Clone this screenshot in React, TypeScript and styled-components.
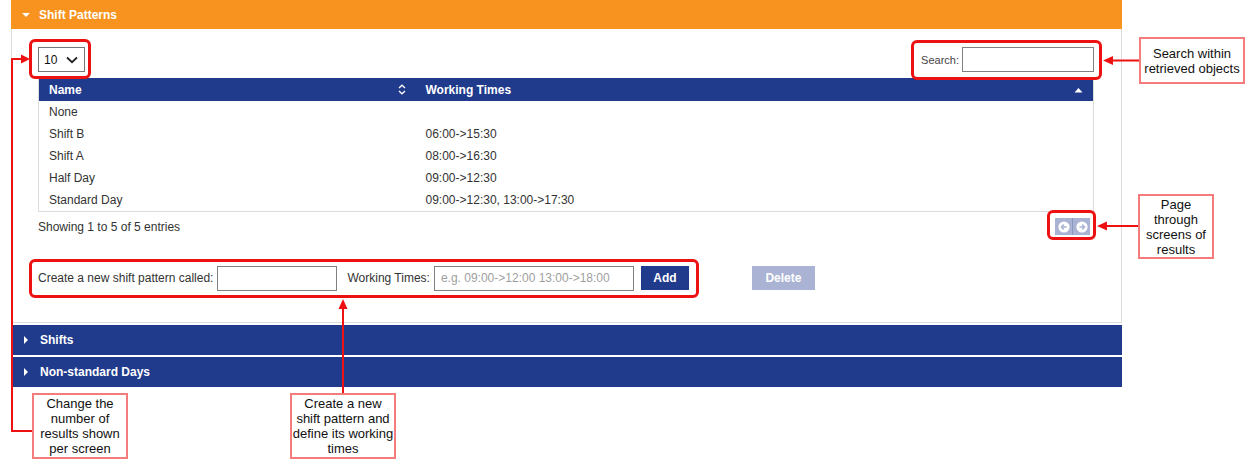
import styled, { createGlobalStyle } from "styled-components";

const GlobalStyle = createGlobalStyle`
  html, body {
    margin: 0;
    padding: 0;
    background: #fff;
    font-family: "Liberation Sans", Arial, sans-serif;
  }
`;

type Row = { name: string; times: string };

const rows: Row[] = [
  { name: "None", times: "" },
  { name: "Shift B", times: "06:00->15:30" },
  { name: "Shift A", times: "08:00->16:30" },
  { name: "Half Day", times: "09:00->12:30" },
  { name: "Standard Day", times: "09:00->12:30, 13:00->17:30" },
];

const BLUE = "#203a8c";

const App = () => {
  return (
    <Canvas>
      <GlobalStyle />
      <Page>
        <SectionBar $color="#f7931e">
          <Caret $open />
          Shift Patterns
        </SectionBar>
        <PanelBody>
          <TopRow>
            <FakeSelect>
              <span>10</span>
              <svg width="12" height="8" viewBox="0 0 12 8">
                <path d="M1 1.5 L6 6.2 L11 1.5" fill="none" stroke="#222" strokeWidth="1.8" />
              </svg>
            </FakeSelect>
            <SearchLabel>
              Search:
              <SearchInput type="text" />
            </SearchLabel>
          </TopRow>

          <Table>
            <thead>
              <tr>
                <HeadCell $width={377}>
                  <HeadInner>
                    Name
                    <svg width="8" height="11" viewBox="0 0 8 11">
                      <path d="M1 4 L4 1.2 L7 4 M1 7 L4 9.8 L7 7" fill="none" stroke="#fff" strokeWidth="1.3" />
                    </svg>
                  </HeadInner>
                </HeadCell>
                <HeadCell>
                  <HeadInner>
                    Working Times
                    <svg width="9" height="6" viewBox="0 0 9 6">
                      <path d="M0.5 5.5 L4.5 1 L8.5 5.5 Z" fill="#fff" />
                    </svg>
                  </HeadInner>
                </HeadCell>
              </tr>
            </thead>
            <tbody>
              {rows.map((r) => (
                <tr key={r.name}>
                  <Cell>{r.name}</Cell>
                  <Cell>{r.times}</Cell>
                </tr>
              ))}
            </tbody>
          </Table>

          <InfoRow>
            <span>Showing 1 to 5 of 5 entries</span>
            <Pager>
              <PageBtn>
                <ArrowCircle dir="left" />
              </PageBtn>
              <PageBtn>
                <ArrowCircle dir="right" />
              </PageBtn>
            </Pager>
          </InfoRow>

          <FormRow>
            <FormLabel>Create a new shift pattern called:</FormLabel>
            <TextInput type="text" $width={120} />
            <FormLabel style={{ marginLeft: 10 }}>Working Times:</FormLabel>
            <TextInput type="text" $width={200} placeholder="e.g. 09:00->12:00 13:00->18:00" />
            <ActionButton $color={BLUE} $width={48} style={{ marginLeft: 7 }}>
              Add
            </ActionButton>
            <ActionButton $color="#aab3d4" $width={63} style={{ marginLeft: 63 }}>
              Delete
            </ActionButton>
          </FormRow>
        </PanelBody>

        <SectionBar $color={BLUE} $gap>
          <Caret />
          Shifts
        </SectionBar>
        <SectionBar $color={BLUE} $gap>
          <Caret />
          Non-standard Days
        </SectionBar>
      </Page>

      {/* callout highlights */}
      <Highlight style={{ left: 29, top: 39, width: 62, height: 40 }} />
      <Highlight style={{ left: 911, top: 40, width: 191, height: 40 }} />
      <Highlight style={{ left: 1047, top: 210, width: 49, height: 30 }} />
      <Highlight style={{ left: 29, top: 259, width: 670, height: 39 }} />

      <Leaders width="1256" height="471" viewBox="0 0 1256 471">
        <g stroke="#ee1111" strokeWidth="2" fill="none">
          <path d="M12 59 L22 59 M12 58 L12 431 L33 431" />
          <path d="M1139 60.5 L1112 60.5" />
          <path d="M1139 226 L1106 226" />
          <path d="M343 394 L343 308" />
        </g>
        <g fill="#ee1111">
          <path d="M30 59 L21 54.5 L21 63.5 Z" />
          <path d="M1103 60.5 L1113 56 L1113 65 Z" />
          <path d="M1097 226 L1107 221.5 L1107 230.5 Z" />
          <path d="M343 299 L338.5 309 L347.5 309 Z" />
        </g>
      </Leaders>

      <Note style={{ left: 1139, top: 37, width: 102, height: 43 }}>
        Search within
        <br />
        retrieved objects
      </Note>
      <Note style={{ left: 1138, top: 194, width: 72, height: 61 }}>
        Page
        <br />
        through
        <br />
        screens of
        <br />
        results
      </Note>
      <Note style={{ left: 32, top: 393, width: 92, height: 62 }}>
        Change the
        <br />
        number of
        <br />
        results shown
        <br />
        per screen
      </Note>
      <Note style={{ left: 290, top: 393, width: 102, height: 62 }}>
        Create a new
        <br />
        shift pattern and
        <br />
        define its working
        <br />
        times
      </Note>
    </Canvas>
  );
};

const ArrowCircle = ({ dir }: { dir: "left" | "right" }) => (
  <svg width="12" height="12" viewBox="0 0 12 12">
    <circle cx="6" cy="6" r="5.6" fill="#fff" />
    {dir === "left" ? (
      <path d="M8.6 6 H3.6 M5.8 3.6 L3.4 6 L5.8 8.4" fill="none" stroke="#aab3d4" strokeWidth="1.4" />
    ) : (
      <path d="M3.4 6 H8.4 M6.2 3.6 L8.6 6 L6.2 8.4" fill="none" stroke="#aab3d4" strokeWidth="1.4" />
    )}
  </svg>
);

const Canvas = styled.div`
  position: relative;
  width: 1256px;
  height: 471px;
  overflow: hidden;
`;

const Page = styled.div`
  margin-left: 11px;
  width: 1111px;
`;

const SectionBar = styled.div<{ $color: string; $gap?: boolean }>`
  display: flex;
  align-items: center;
  gap: 9px;
  height: ${(p) => (p.$gap ? "30px" : "29px")};
  margin-top: ${(p) => (p.$gap ? "2px" : "0")};
  padding-left: 11px;
  background: ${(p) => p.$color};
  color: #fff;
  font-size: 12px;
  font-weight: bold;
`;

const Caret = styled.span<{ $open?: boolean }>`
  display: inline-block;
  width: 0;
  height: 0;
  margin-left: ${(p) => (p.$open ? "0" : "2px")};
  margin-right: ${(p) => (p.$open ? "0" : "3px")};
  ${(p) =>
    p.$open
      ? `border-left: 4px solid transparent;
         border-right: 4px solid transparent;
         border-top: 4px solid #fff;`
      : `border-top: 4px solid transparent;
         border-bottom: 4px solid transparent;
         border-left: 4px solid #fff;`}
`;

const PanelBody = styled.div`
  border: 1px solid #dcdcdc;
  border-top: none;
  padding: 18px 27px 31px 26px;
`;

const TopRow = styled.div`
  display: flex;
  justify-content: space-between;
  align-items: center;
  height: 25px;
  margin-bottom: 6px;
`;

const FakeSelect = styled.div`
  box-sizing: border-box;
  width: 47px;
  height: 25px;
  border: 1px solid #767676;
  display: flex;
  align-items: center;
  justify-content: space-between;
  padding: 0 6px 0 5px;
  font-size: 12px;
  color: #111;
`;

const SearchLabel = styled.label`
  display: flex;
  align-items: center;
  gap: 3px;
  font-size: 11px;
  color: #444;
`;

const SearchInput = styled.input`
  box-sizing: border-box;
  width: 132px;
  height: 25px;
  border: 1px solid #808080;
  margin: 0;
  outline: none;
`;

const Table = styled.table`
  width: 100%;
  border-collapse: collapse;
  font-size: 12px;
  color: #333;
  border-left: 1px solid #dcdcdc;
  border-right: 1px solid #dcdcdc;
  border-bottom: 1px solid #dcdcdc;
`;

const HeadCell = styled.th<{ $width?: number }>`
  background: ${BLUE};
  color: #fff;
  height: 23px;
  padding: 0 10px;
  text-align: left;
  font-weight: bold;
  width: ${(p) => (p.$width ? `${p.$width}px` : "auto")};
  box-sizing: border-box;
`;

const HeadInner = styled.div`
  display: flex;
  justify-content: space-between;
  align-items: center;
`;

const Cell = styled.td`
  height: 22px;
  padding: 0 10px;
  box-sizing: border-box;
`;

const InfoRow = styled.div`
  display: flex;
  justify-content: space-between;
  align-items: center;
  height: 20px;
  margin-top: 5px;
  font-size: 12px;
  color: #333;
`;

const Pager = styled.div`
  display: flex;
  margin-right: 4px;
  gap: 1px;
  background: #8d97bd;
`;

const PageBtn = styled.div`
  width: 17px;
  height: 17px;
  background: #aab3d4;
  display: flex;
  align-items: center;
  justify-content: center;
`;

const FormRow = styled.div`
  display: flex;
  align-items: center;
  margin-top: 29px;
  height: 25px;
`;

const FormLabel = styled.span`
  font-size: 12px;
  color: #333;
  margin-right: 4px;
`;

const TextInput = styled.input<{ $width: number }>`
  box-sizing: border-box;
  width: ${(p) => p.$width}px;
  height: 25px;
  margin: 0;
  padding: 0 6px;
  border: 1px solid #808080;
  font-family: "Liberation Sans", Arial, sans-serif;
  font-size: 12px;
  outline: none;
  &::placeholder {
    color: #a0a0a0;
  }
`;

const ActionButton = styled.button<{ $color: string; $width: number }>`
  width: ${(p) => p.$width}px;
  height: 24px;
  border: none;
  padding: 0;
  background: ${(p) => p.$color};
  color: #fff;
  font-family: "Liberation Sans", Arial, sans-serif;
  font-size: 12px;
  font-weight: bold;
`;

const Highlight = styled.div`
  position: absolute;
  box-sizing: border-box;
  border: 3px solid #ee1111;
  border-radius: 6px;
  pointer-events: none;
`;

const Leaders = styled.svg`
  position: absolute;
  left: 0;
  top: 0;
  pointer-events: none;
`;

const Note = styled.div`
  position: absolute;
  display: flex;
  align-items: center;
  justify-content: center;
  text-align: center;
  background: #fff;
  border: 2px solid #f47c7c;
  font-size: 13px;
  line-height: 15px;
  color: #111;
`;

export default App;
